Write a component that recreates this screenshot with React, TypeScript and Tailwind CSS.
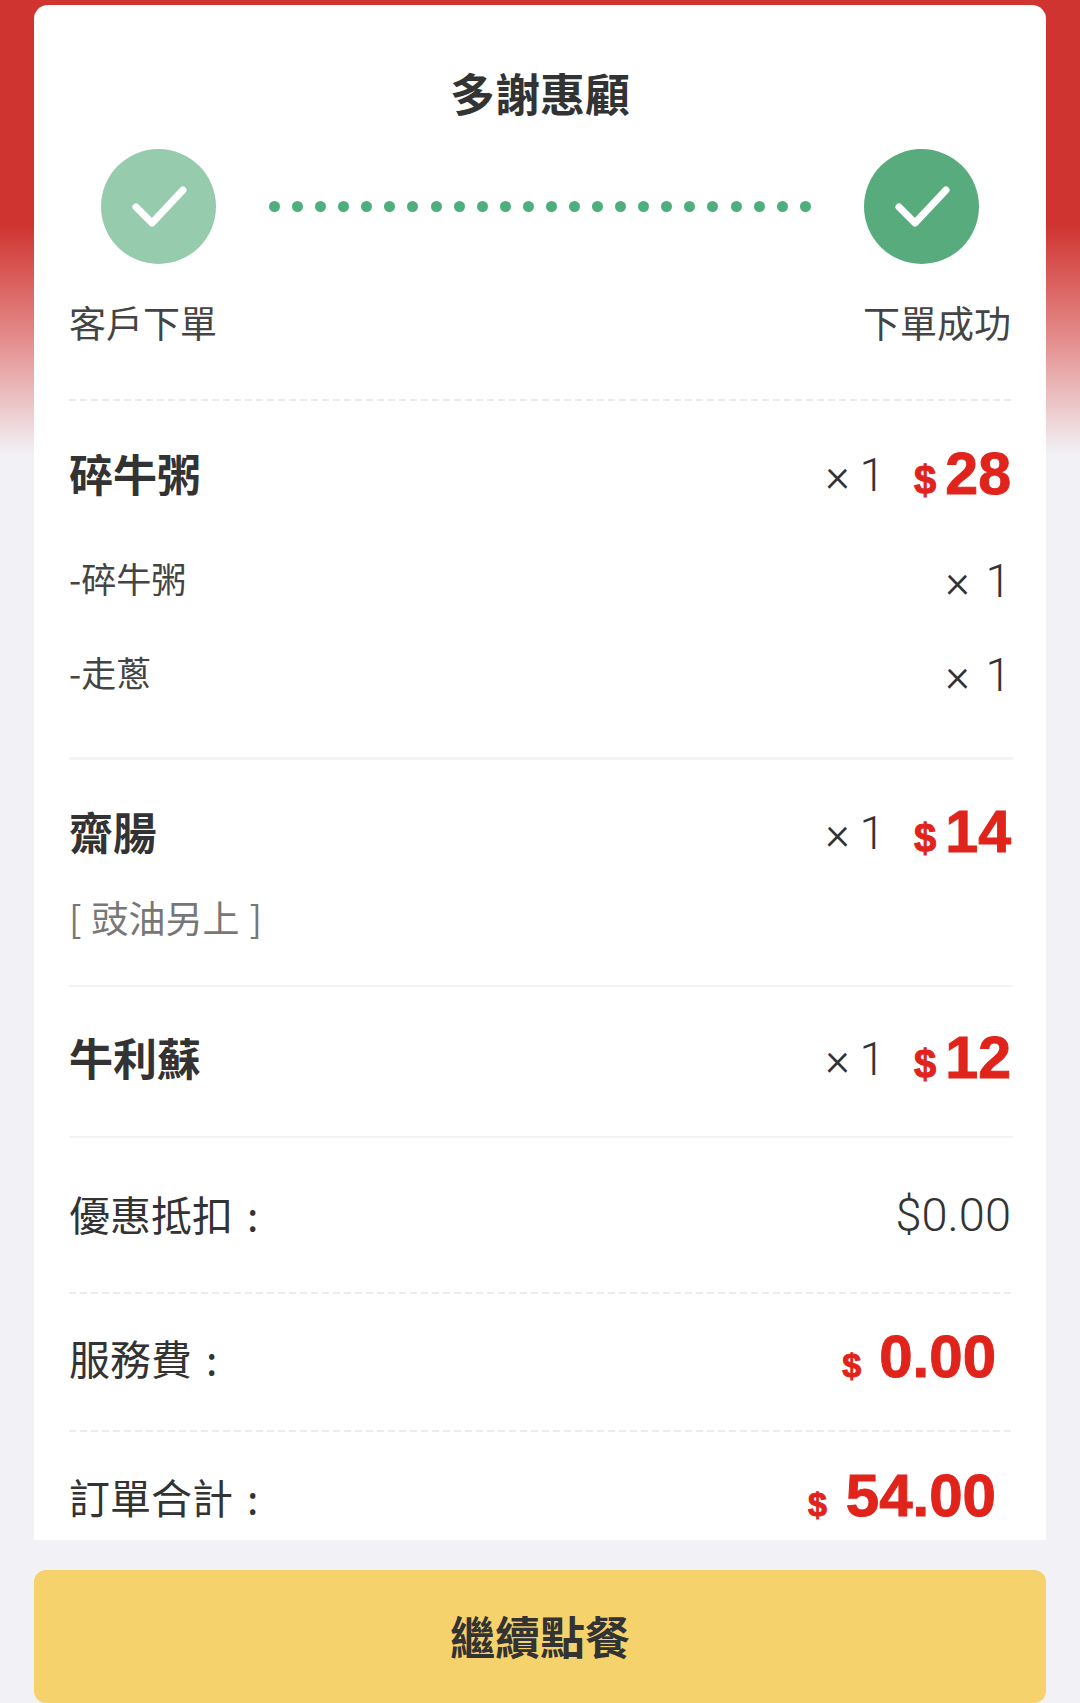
import React from 'react';

const cjk = "font-['Noto_Sans_CJK_TC',sans-serif]";
const latin = "font-['Roboto',sans-serif]";
const price = "font-['Liberation_Sans',sans-serif]";
const heavy = '[-webkit-text-stroke:1px_#e0241c]';

function DashedRule() {
    return <div className="h-[2px] -mr-[2px] bg-[repeating-linear-gradient(90deg,#ececec_0,#ececec_7px,transparent_7px,transparent_11px)]" />;
}

function SolidRule({ className }: { className: string }) {
    return <div className={`-mr-[2px] bg-[#f3f3f3] ${className}`} />;
}

function Check({ className }: { className: string }) {
    return (
        <div className={`w-[115px] h-[115px] rounded-full shrink-0 ${className}`}>
            <svg width="115" height="115" viewBox="0 0 115 115" fill="none">
                <path d="M35 58 L51 74 L82 41" stroke="#fff" strokeWidth="7" strokeLinecap="round" strokeLinejoin="round" />
            </svg>
        </div>
    );
}

function Qty({ gap }: { gap: string }) {
    return (
        <span className={`${latin} font-light text-[46px] leading-[60px] text-[#333] flex items-baseline ${gap}`}>
            <span>×</span>
            <span>1</span>
        </span>
    );
}

function ItemRow({ name, amount, className }: { name: string; amount: number; className: string }) {
    return (
        <div className={`flex items-center justify-between h-[60px] ${className}`}>
            <span className={`${cjk} text-[44px] font-bold leading-[60px] text-[#333] -mt-[5px]`}>{name}</span>
            <div className="flex items-center">
                <Qty gap="gap-[10px]" />
                <div className={`${price} font-bold text-[#e0241c] flex items-baseline ml-[29px] mt-[3px]`}>
                    <span className={`text-[40px] leading-[60px] mr-[9px] ${heavy}`}>$</span>
                    <span className={`text-[59px] leading-[60px] ${heavy}`}>{amount}</span>
                </div>
            </div>
        </div>
    );
}

function SubRow({ name }: { name: string }) {
    return (
        <div className="flex items-center justify-between h-[94px]">
            <span className={`${cjk} text-[35px] text-[#444] -mt-[5px]`}>-{name}</span>
            <Qty gap="gap-[16px]" />
        </div>
    );
}

function Label({ text }: { text: string }) {
    return (
        <span className={`${cjk} text-[41px] leading-[60px] text-[#333] -mt-[5px] flex items-baseline gap-[14px]`}>
            <span>{text}</span>
            <span>:</span>
        </span>
    );
}

function TotalRow({ label, value, dollar, className }: { label: string; value: string; dollar: string; className: string }) {
    return (
        <div className={`flex items-center justify-between h-[60px] ${className}`}>
            <Label text={label} />
            <div className={`${price} font-bold text-[#e0241c] flex items-baseline pr-[15px] mt-[3px]`}>
                <span className={`text-[34px] leading-[60px] ${dollar} ${heavy}`}>$</span>
                <span className={`text-[60px] leading-[60px] ${heavy}`}>{value}</span>
            </div>
        </div>
    );
}

export default function App() {
    return (
        <div className="h-[1703px] overflow-hidden px-[34px] pt-[5px] bg-[linear-gradient(180deg,#cf3430_0,#cf3430_225px,#e48d8d_340px,#f2f2f6_455px)]">
            <div className="bg-white rounded-t-[14px] h-[1535px] px-[35px] pt-[61px]">
                <h1 className={`${cjk} text-center text-[45px] font-bold leading-[60px] text-[#333] -translate-y-[3px]`}>多謝惠顧</h1>

                {/* Progress */}
                <div className="flex items-center mt-[23px] px-[32px]">
                    <Check className="bg-[#97cbae]" />
                    <div className="flex-1 flex justify-between mx-[53px]">
                        {Array.from({ length: 24 }).map((_, i) => (
                            <span key={i} className="w-[11px] h-[11px] rounded-full bg-[#4fae7d]" />
                        ))}
                    </div>
                    <Check className="bg-[#58ab7d]" />
                </div>
                <div className={`${cjk} flex justify-between mt-[38px] text-[37px] leading-[40px] text-[#444]`}>
                    <span>客戶下單</span>
                    <span>下單成功</span>
                </div>
                <div className="mt-[57px]"><DashedRule /></div>

                {/* Items */}
                <ItemRow name="碎牛粥" amount={28} className="mt-[44px]" />
                <div className="mt-[29px]">
                    <SubRow name="碎牛粥" />
                    <SubRow name="走蔥" />
                </div>
                <SolidRule className="mt-[35px] h-[3px]" />

                <ItemRow name="齋腸" amount={14} className="mt-[43px]" />
                <div className={`${cjk} flex gap-[10px] mt-[29px] text-[37px] leading-[50px] text-[#777]`}>
                    <span>[</span>
                    <span>豉油另上</span>
                    <span>]</span>
                </div>
                <SolidRule className="mt-[43px] h-[2px]" />

                <ItemRow name="牛利蘇" amount={12} className="mt-[42px]" />
                <SolidRule className="mt-[47px] h-[2px]" />

                {/* Totals */}
                <div className="flex items-center justify-between h-[60px] mt-[47px]">
                    <Label text="優惠抵扣" />
                    <span className={`${latin} font-light text-[47px] leading-[60px] text-[#333]`}>$0.00</span>
                </div>
                <div className="mt-[47px]"><DashedRule /></div>
                <TotalRow label="服務費" value="0.00" dollar="mr-[18px]" className="mt-[35px]" />
                <div className="mt-[41px]"><DashedRule /></div>
                <TotalRow label="訂單合計" value="54.00" dollar="mr-[19px]" className="mt-[36px]" />
            </div>

            <button className={`${cjk} block w-full h-[133px] mt-[30px] rounded-[12px] bg-[#f5d26b] text-[45px] font-bold text-[#333] pb-[2px]`}>
                繼續點餐
            </button>
        </div>
    );
}
